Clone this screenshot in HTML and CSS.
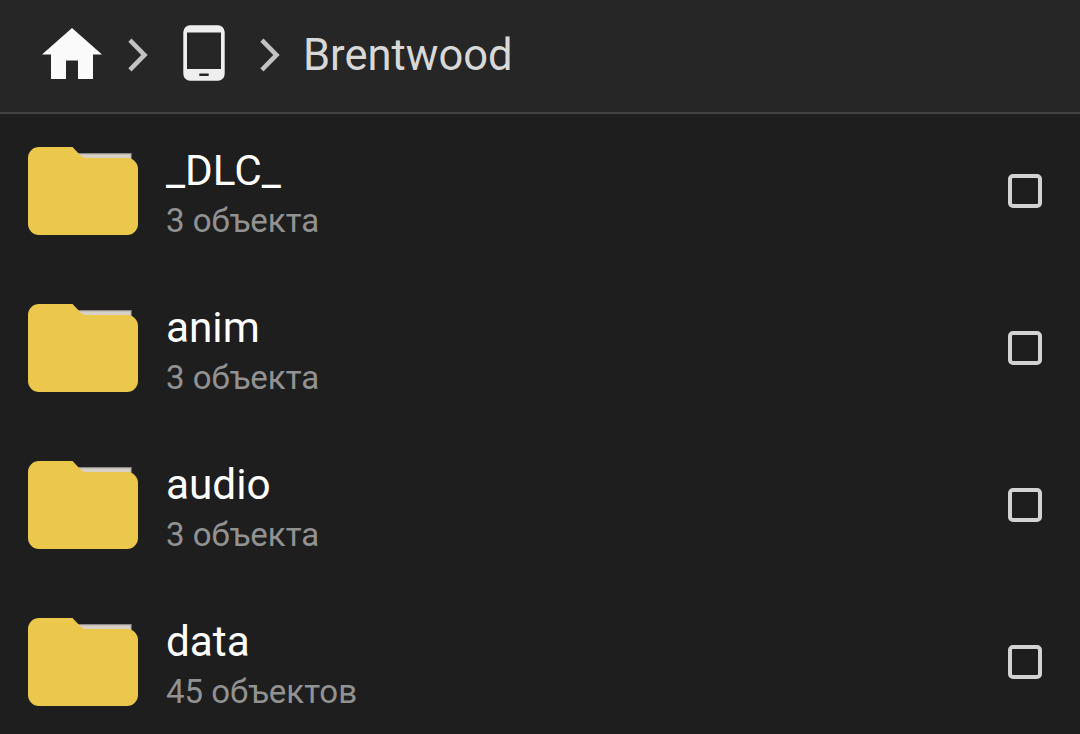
FILE: index.html
```html
<!DOCTYPE html>
<html lang="ru">
<head>
  <meta charset="UTF-8" />
  <meta name="viewport" content="width=device-width, initial-scale=1.0"/>
  <title>Brentwood</title>
  <link rel="stylesheet" href="styles.css">
</head>
<body>
  <svg class="sprite" aria-hidden="true">
    <symbol id="folder" viewBox="0 0 110 88">
      <path fill="#8d8b87" d="M46 6H103.7V14H46z"/>
      <path fill="#d8d0c4" d="M46 7.3H102.7V14H46z"/>
      <path fill="#ebc84b" d="M11 0H44.5L53 9Q55 11 58 11H99A11 11 0 0 1 110 22V77A11 11 0 0 1 99 88H11A11 11 0 0 1 0 77V11A11 11 0 0 1 11 0z"/>
    </symbol>
    <symbol id="chevron" viewBox="0 0 20 34">
      <path fill="#c2c2c2" d="M3.5 .5L19.7 17L3.5 33.5L.3 30.2L13.2 17L.3 3.8z"/>
    </symbol>
  </svg>

  <header class="breadcrumbs">
    <svg class="home" viewBox="0 0 60 51"><path fill="#fafafa" d="M30 0L60 26.5H51V51H36V32.5H24V51H9V26.5H0z"/></svg>
    <svg class="chevron"><use href="#chevron"/></svg>
    <svg class="device" viewBox="0 0 42 56">
      <path fill="#eeeeee" fill-rule="evenodd" d="M7 .3H35A7 7 0 0 1 41.7 7V49A7 7 0 0 1 35 55.7H7A7 7 0 0 1 .3 49V7A7 7 0 0 1 7 .3zM4 7.5V44H38V7.5zM16.3 48.5V51H25.7V48.5z"/>
    </svg>
    <svg class="chevron"><use href="#chevron"/></svg>
    <span class="current">Brentwood</span>
  </header>

  <ul class="file-list">
    <li class="file">
      <svg class="folder"><use href="#folder"/></svg>
      <div class="info">
        <div class="name">_DLC_</div>
        <div class="count">3 объекта</div>
      </div>
      <span class="checkbox"></span>
    </li>
    <li class="file">
      <svg class="folder"><use href="#folder"/></svg>
      <div class="info">
        <div class="name">anim</div>
        <div class="count">3 объекта</div>
      </div>
      <span class="checkbox"></span>
    </li>
    <li class="file">
      <svg class="folder"><use href="#folder"/></svg>
      <div class="info">
        <div class="name">audio</div>
        <div class="count">3 объекта</div>
      </div>
      <span class="checkbox"></span>
    </li>
    <li class="file">
      <svg class="folder"><use href="#folder"/></svg>
      <div class="info">
        <div class="name">data</div>
        <div class="count">45 объектов</div>
      </div>
      <span class="checkbox"></span>
    </li>
  </ul>
</body>
</html>
```
FILE: styles.css
```css
* {
  box-sizing: border-box;
}

body {
  margin: 0;
  height: 100vh;
  overflow: hidden;
  background-color: #1e1e1e;
  color: #ffffff;
  font-family: Roboto, "Noto Sans", sans-serif;
}

.sprite {
  display: none;
}

.breadcrumbs {
  display: flex;
  align-items: center;
  height: 114px;
  padding: 0 42px 6px;
  background-color: #262626;
  border-bottom: 2px solid #414141;
}

.home {
  width: 60px;
  height: 51px;
}

.chevron {
  width: 20px;
  height: 34px;
  margin-top: 3px;
}

.home + .chevron {
  margin-left: 26px;
}

.device {
  width: 42px;
  height: 56px;
  margin-left: 35px;
}

.device + .chevron {
  margin-left: 35px;
}

.current {
  margin-left: 23px;
  padding-top: 6px;
  color: #d8d8d8;
  font-size: 43.5px;
  line-height: 52px;
}

.file-list {
  margin: 0;
  padding: 0;
  list-style: none;
}

.file {
  display: flex;
  align-items: center;
  height: 157px;
  padding: 0 38px 3px 28px;
}

.folder {
  width: 110px;
  height: 88px;
}

.info {
  flex: 1;
  margin-left: 28px;
  padding-top: 9px;
}

.name {
  font-size: 42.3px;
  line-height: 50px;
}

.count {
  color: #929292;
  font-size: 33px;
  line-height: 50px;
}

.checkbox {
  width: 34px;
  height: 34px;
  border: 4px solid #d2d2d2;
  border-radius: 5px;
}
```
